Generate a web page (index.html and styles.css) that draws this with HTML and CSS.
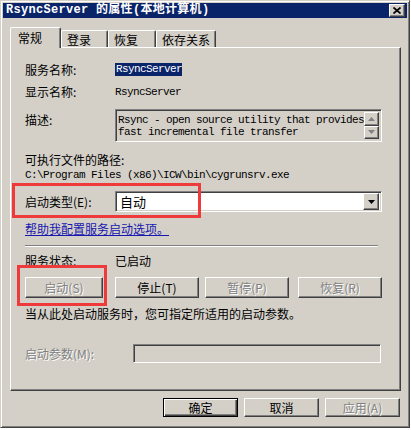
FILE: index.html
```html
<!DOCTYPE html>
<html lang="zh-CN">
<head>
  <meta charset="UTF-8" />
  <title>RsyncServer 的属性</title>
  <link rel="stylesheet" href="styles.css">
</head>
<body>

  <div class="window">
    <div class="titlebar">
      <span class="title">RsyncServer 的属性(本地计算机)</span>
      <span class="close">
        <svg width="8" height="7" viewBox="0 0 8 7"><path d="M0.5 0.5 L7.5 6.5 M7.5 0.5 L0.5 6.5" stroke="#000" stroke-width="1.7" fill="none"/></svg>
      </span>
    </div>

    <div class="client">
      <div class="tabs">
        <div class="tab active">常规</div>
        <div class="tab tab-login">登录</div>
        <div class="tab tab-recover">恢复</div>
        <div class="tab tab-deps">依存关系</div>
      </div>

      <div class="panel">
        <div class="row row-name">
          <span class="label">服务名称:</span>
          <span class="en selected">RsyncServer</span>
        </div>
        <div class="row row-display">
          <span class="label">显示名称:</span>
          <span class="en">RsyncServer</span>
        </div>
        <div class="row row-desc">
          <span class="label">描述:</span>
          <div class="desc-box">
            <div class="desc-text en">Rsync - open source utility that provides<br>fast incremental file transfer</div>
            <div class="scroll">
              <span class="sbtn"><svg width="7" height="4" viewBox="0 0 7 4"><path d="M3.5 0 L7 4 L0 4Z" fill="#808080"/></svg></span>
              <span class="sbtn"><svg width="7" height="4" viewBox="0 0 7 4"><path d="M0 0 L7 0 L3.5 4Z" fill="#808080"/></svg></span>
            </div>
          </div>
        </div>

        <div class="path-label">可执行文件的路径:</div>
        <div class="path en">C:\Program Files (x86)\ICW\bin\cygrunsrv.exe</div>

        <div class="row row-type">
          <span class="label">启动类型(E):</span>
          <div class="combo">
            <span class="combo-value">自动</span>
            <span class="drop"><svg width="7" height="4" viewBox="0 0 7 4"><path d="M0 0 L7 0 L3.5 4Z" fill="#000"/></svg></span>
          </div>
        </div>

        <a class="help-link" href="#">帮助我配置服务启动选项。</a>

        <div class="sep"></div>

        <div class="row row-status">
          <span class="label">服务状态:</span>
          <span>已启动</span>
        </div>

        <div class="svc-btns">
          <button class="btn btn-start" disabled>启动(S)</button>
          <button class="btn btn-stop">停止(T)</button>
          <button class="btn btn-pause" disabled>暂停(P)</button>
          <button class="btn btn-resume" disabled>恢复(R)</button>
        </div>

        <p class="hint">当从此处启动服务时，您可指定所适用的启动参数。</p>

        <div class="row row-param">
          <span class="label label-param disabled">启动参数(M):</span>
          <div class="param-input"></div>
        </div>
      </div>

      <div class="footer">
        <button class="btn btn-footer default">确定</button>
        <button class="btn btn-footer">取消</button>
        <button class="btn btn-footer" disabled>应用(A)</button>
      </div>
    </div>

    <div class="mark mark-type"></div>
    <div class="mark mark-start"></div>
  </div>

</body>
</html>
```

FILE: styles.css
```css
* {
  box-sizing: border-box;
}

body {
  margin: 0;
  background: #fff;
  font-family: "Noto Sans CJK SC", sans-serif;
  font-size: 12px;
  line-height: 12px;
  color: #000;
}

.en {
  font-family: "Liberation Mono", "Noto Sans CJK SC", monospace;
  font-size: 11px;
  letter-spacing: -0.6px;
}

/* Window frame */
.window {
  position: relative;
  width: 410px;
  height: 428px;
  background: #d4d0c8;
  border: 1px solid;
  border-color: #d4d0c8 #404040 #404040 #d4d0c8;
  box-shadow: inset 1px 1px #fff, inset -1px -1px #808080;
  padding: 2px;
  display: flex;
  flex-direction: column;
}

.titlebar {
  height: 15px;
  background: #0a246a;
  display: flex;
  align-items: center;
  justify-content: space-between;
  padding: 0 2px 0 3px;
}

.title {
  color: #fff;
  font-family: "Liberation Mono", "Noto Sans CJK SC", monospace;
  font-weight: bold;
  font-size: 12px;
  line-height: 13px;
  letter-spacing: 0.3px;
  white-space: nowrap;
}

.close {
  width: 16px;
  height: 13px;
  background: #d4d0c8;
  border: 1px solid;
  border-color: #fff #404040 #404040 #fff;
  box-shadow: inset -1px -1px #808080;
  display: flex;
  align-items: center;
  justify-content: center;
}

.client {
  flex: 1;
  padding: 9px 6px 0 7px;
}

/* Tabs */
.tabs {
  display: flex;
  align-items: flex-end;
  height: 20px;
}

.tab {
  height: 17px;
  padding: 3px 0 0 5px;
  background: #d4d0c8;
  border-top: 1px solid #fff;
  border-left: 1px solid #fff;
  border-right: 1px solid #404040;
  box-shadow: inset -1px 0 #808080;
  border-radius: 2px 2px 0 0;
}

.tab.active {
  position: relative;
  z-index: 1;
  width: 51px;
  height: 21px;
  margin-bottom: -1px;
  padding: 4px 0 0 7px;
}

.tab-login {
  width: 47px;
}

.tab-recover {
  width: 48px;
}

.tab-deps {
  width: 60px;
}

.panel {
  width: 391px;
  height: 344px;
  border: 1px solid;
  border-color: #fff #404040 #404040 #fff;
  box-shadow: inset -1px -1px #808080;
  padding: 15px 0 0 14px;
}

.row {
  display: flex;
  align-items: center;
}

.label {
  width: 90px;
  flex: none;
  white-space: nowrap;
}

.disabled {
  color: #808080;
  text-shadow: 1px 1px #fff;
}

.row-name {
  height: 13px;
}

.selected {
  background: #0a246a;
  color: #fff;
  height: 13px;
  line-height: 13px;
  padding-left: 1px;
}

.row-display {
  margin-top: 10px;
  height: 12px;
}

.row-desc {
  margin-top: 11px;
  align-items: flex-start;
}

.row-desc .label {
  padding-top: 5px;
}

/* Sunken boxes */
.desc-box,
.combo,
.param-input {
  border: 1px solid;
  border-color: #808080 #fff #fff #808080;
  box-shadow: inset 1px 1px #404040, inset -1px -1px #d4d0c8;
}

.desc-box {
  width: 267px;
  height: 33px;
  display: flex;
  padding: 2px;
}

.desc-text {
  flex: 1;
  line-height: 12px;
  white-space: nowrap;
  padding-top: 2px;
}

.scroll {
  width: 16px;
  display: flex;
  flex-direction: column;
}

.sbtn,
.drop {
  flex: 1;
  display: flex;
  align-items: center;
  justify-content: center;
  background: #d4d0c8;
  border: 1px solid;
  border-color: #fff #404040 #404040 #fff;
  box-shadow: inset -1px -1px #808080;
}

.path-label {
  margin-top: 12px;
  height: 12px;
}

.path {
  margin-top: 3px;
  height: 12px;
  line-height: 12px;
  white-space: nowrap;
}

.row-type {
  margin-top: 10px;
}

.combo {
  width: 267px;
  height: 21px;
  background: #fff;
  display: flex;
  align-items: center;
  padding: 2px;
}

.combo-value {
  flex: 1;
  font-size: 13px;
  padding-left: 2px;
}

.drop {
  flex: none;
  width: 16px;
  height: 17px;
}

.help-link {
  display: block;
  width: max-content;
  margin-top: 10px;
  line-height: 13px;
  color: #1818b0;
  text-decoration: underline;
}

.sep {
  margin-top: 10px;
  width: 353px;
  height: 2px;
  border-top: 1px solid #808080;
  border-bottom: 1px solid #fff;
}

.row-status {
  margin-top: 8px;
  height: 12px;
}

/* Buttons */
.btn {
  font-family: inherit;
  font-size: 12px;
  line-height: 12px;
  color: #000;
  background: #d4d0c8;
  border: 1px solid;
  border-color: #fff #404040 #404040 #fff;
  box-shadow: inset -1px -1px #808080;
  padding: 0;
  display: flex;
  align-items: center;
  justify-content: center;
}

.btn:disabled {
  color: #808080;
  text-shadow: 1px 1px #fff;
}

.btn.default {
  border-color: #000;
  box-shadow: inset 1px 1px #fff, inset -1px -1px #404040, inset -2px -2px #808080;
}

.svc-btns {
  margin-top: 10px;
  display: flex;
  height: 21px;
}

.svc-btns .btn {
  height: 21px;
  width: 84px;
}

.svc-btns .btn-start {
  width: 78px;
}

.btn-stop {
  margin-left: 12px;
}

.btn-pause {
  margin-left: 6px;
}

.btn-resume {
  margin-left: 9px;
  width: 83px;
}

.hint {
  margin: 10px 0 0;
  height: 12px;
  white-space: nowrap;
}

.row-param {
  margin-top: 24px;
}

.label-param {
  width: 108px;
}

.param-input {
  width: 248px;
  height: 19px;
}

.footer {
  margin-top: 7px;
  display: flex;
  justify-content: flex-end;
  gap: 6px;
  padding-right: 1px;
}

.btn-footer {
  width: 75px;
  height: 19px;
}

/* Red highlight boxes drawn over the dialog */
.mark {
  position: absolute;
  border: 3px solid #ee3a3a;
}

.mark-type {
  left: 11px;
  top: 182px;
  width: 189px;
  height: 35px;
}

.mark-start {
  left: 16px;
  top: 264px;
  width: 90px;
  height: 41px;
}
```
